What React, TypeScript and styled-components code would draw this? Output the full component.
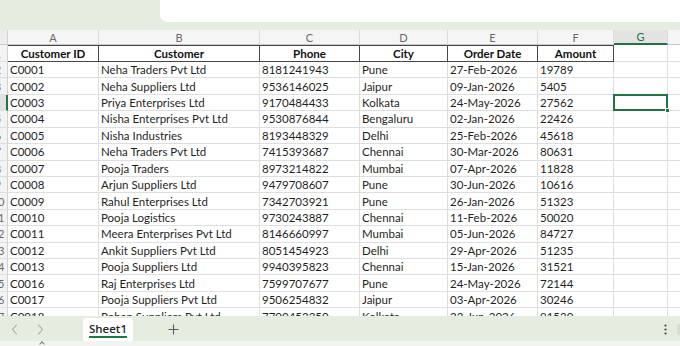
import * as React from 'react';
import styled, { createGlobalStyle } from 'styled-components';

const GlobalStyle = createGlobalStyle`
  html, body {
    margin: 0;
    padding: 0;
    background: #ffffff;
  }
  body {
    font-family: Lato, "Open Sans", "Liberation Sans", sans-serif;
  }
`;

const columns = [
  { letter: 'A', title: 'Customer ID', width: 91 },
  { letter: 'B', title: 'Customer', width: 161 },
  { letter: 'C', title: 'Phone', width: 100 },
  { letter: 'D', title: 'City', width: 88 },
  { letter: 'E', title: 'Order Date', width: 90 },
  { letter: 'F', title: 'Amount', width: 76 },
];

const G_WIDTH = 54;
const H_WIDTH = 64;

const rows = [
  ['C0001', 'Neha Traders Pvt Ltd', '8181241943', 'Pune', '27-Feb-2026', '19789'],
  ['C0002', 'Neha Suppliers Ltd', '9536146025', 'Jaipur', '09-Jan-2026', '5405'],
  ['C0003', 'Priya Enterprises Ltd', '9170484433', 'Kolkata', '24-May-2026', '27562'],
  ['C0004', 'Nisha Enterprises Pvt Ltd', '9530876844', 'Bengaluru', '02-Jan-2026', '22426'],
  ['C0005', 'Nisha Industries', '8193448329', 'Delhi', '25-Feb-2026', '45618'],
  ['C0006', 'Neha Traders Pvt Ltd', '7415393687', 'Chennai', '30-Mar-2026', '80631'],
  ['C0007', 'Pooja Traders', '8973214822', 'Mumbai', '07-Apr-2026', '11828'],
  ['C0008', 'Arjun Suppliers Ltd', '9479708607', 'Pune', '30-Jun-2026', '10616'],
  ['C0009', 'Rahul Enterprises Ltd', '7342703921', 'Pune', '26-Jan-2026', '51323'],
  ['C0010', 'Pooja Logistics', '9730243887', 'Chennai', '11-Feb-2026', '50020'],
  ['C0011', 'Meera Enterprises Pvt Ltd', '8146660997', 'Mumbai', '05-Jun-2026', '84727'],
  ['C0012', 'Ankit Suppliers Pvt Ltd', '8051454923', 'Delhi', '29-Apr-2026', '51235'],
  ['C0013', 'Pooja Suppliers Ltd', '9940395823', 'Chennai', '15-Jan-2026', '31521'],
  ['C0016', 'Raj Enterprises Ltd', '7599707677', 'Pune', '24-May-2026', '72144'],
  ['C0017', 'Pooja Suppliers Pvt Ltd', '9506254832', 'Jaipur', '03-Apr-2026', '30246'],
  ['C0018', 'Rohan Suppliers Pvt Ltd', '7700453350', 'Kolkata', '23-Jun-2026', '91530'],
];

const SELECTED_ROW = 4;

const Screen = styled.div`
  width: 680px;
  height: 346px;
  display: flex;
  flex-direction: column;
  overflow: hidden;
  background: #ffffff;
`;

const TopBar = styled.div`
  height: 30px;
  flex: none;
  display: flex;
  justify-content: flex-end;
  align-items: flex-start;
  background: #e5ede1;
`;

const FormulaBox = styled.div`
  width: 520px;
  height: 22px;
  background: #ffffff;
  border-bottom-left-radius: 7px;
`;

const Sheet = styled.div`
  flex: 1;
  overflow: hidden;
  display: flex;
  flex-direction: column;
  font-size: 11.5px;
  color: #1f1f1f;
`;

const Row = styled.div<{ $h: number }>`
  display: flex;
  flex: none;
  height: ${(p) => p.$h}px;
`;

const Corner = styled.div`
  width: 8px;
  flex: none;
  box-sizing: border-box;
  background: #ececec;
  border-right: 1px solid #d2d2d2;
  border-bottom: 1px solid #c8c8c8;
`;

const ColLetter = styled.div<{ $w: number; $active?: boolean }>`
  width: ${(p) => p.$w}px;
  flex: none;
  box-sizing: border-box;
  display: flex;
  align-items: center;
  justify-content: center;
  background: ${(p) => (p.$active ? '#e3e3e3' : '#f5f5f5')};
  border-right: 1px solid #dcdcdc;
  border-bottom: ${(p) => (p.$active ? '2px solid #217346' : '1px solid #c8c8c8')};
  color: ${(p) => (p.$active ? '#217346' : '#6a6a6a')};
  font-size: 11px;
`;

const RowHead = styled.div<{ $active?: boolean }>`
  width: 8px;
  flex: none;
  box-sizing: border-box;
  overflow: hidden;
  display: flex;
  justify-content: flex-end;
  align-items: center;
  background: ${(p) => (p.$active ? '#e1e1e1' : '#f3f3f3')};
  border-right: ${(p) => (p.$active ? '2px solid #217346' : '1px solid #d2d2d2')};
  border-bottom: 1px solid #dedede;
  color: #6a6a6a;
  font-size: 11px;
`;

const RowNum = styled.span`
  flex: none;
  width: 24px;
  margin-right: -3px;
  text-align: center;
`;

const TitleCell = styled.div<{ $w: number }>`
  width: ${(p) => p.$w}px;
  flex: none;
  box-sizing: border-box;
  display: flex;
  align-items: center;
  justify-content: center;
  border-top: 1px solid #474747;
  border-right: 1px solid #474747;
  border-bottom: 1px solid #474747;
  font-weight: 700;
  color: #111111;
  white-space: nowrap;
`;

const Cell = styled.div<{ $w: number }>`
  width: ${(p) => p.$w}px;
  flex: none;
  box-sizing: border-box;
  display: flex;
  align-items: center;
  padding-left: 2px;
  border-right: 1px solid #dedede;
  border-bottom: 1px solid #dedede;
  white-space: nowrap;
  overflow: hidden;
`;

const BlankCell = styled(Cell)<{ $selected?: boolean }>`
  position: relative;
  overflow: visible;
  ${(p) =>
    p.$selected &&
    `
    &::after {
      content: '';
      position: absolute;
      left: -1px;
      top: -1px;
      right: -1px;
      bottom: -1px;
      border: 2px solid #217346;
      z-index: 2;
    }
    &::before {
      content: '';
      position: absolute;
      right: -3px;
      bottom: -3px;
      width: 5px;
      height: 5px;
      background: #217346;
      border: 1px solid #ffffff;
      box-sizing: border-box;
      z-index: 3;
    }
  `}
`;

const TabBar = styled.div`
  height: 25px;
  flex: none;
  display: flex;
  align-items: stretch;
  background: #e5ede1;
  padding-top: 2px;
  box-sizing: border-box;
`;

const NavButton = styled.div`
  width: 26px;
  display: flex;
  align-items: center;
  justify-content: center;
  color: #a4a8a3;
`;

const Nav = styled.div`
  display: flex;
  padding-left: 1px;
  width: 82px;
`;

const SheetTab = styled.div`
  width: 50px;
  display: flex;
  flex-direction: column;
  align-items: center;
  justify-content: center;
  background: #ffffff;
  border-radius: 4px 4px 0 0;
  font-family: "Open Sans", Lato, sans-serif;
  font-size: 11.5px;
  font-weight: 600;
  color: #262626;
`;

const TabLabel = styled.span`
  padding-bottom: 1px;
  border-bottom: 2px solid #1e7a45;
  line-height: 13px;
`;

const AddSheet = styled.div`
  width: 80px;
  display: flex;
  align-items: center;
  justify-content: center;
  color: #5c5c5c;
`;

const Spacer = styled.div`
  flex: 1;
`;

const MoreButton = styled.div`
  width: 14px;
  margin-right: 5px;
  display: flex;
  align-items: center;
  justify-content: center;
  color: #444444;
`;

const EdgeDot = styled.div`
  width: 3px;
  margin: 6px 0;
  border-radius: 6px 0 0 6px;
  background: #d5dcd2;
`;

const StatusStrip = styled.div`
  height: 5px;
  flex: none;
  background: #f3f4f2;
  position: relative;
  overflow: hidden;
`;

const Caret = styled.span`
  position: absolute;
  left: 40px;
  top: 1px;
  width: 3px;
  height: 3px;
  border-left: 1px solid #777;
  border-top: 1px solid #777;
  transform: rotate(45deg);
`;

const Chevron = ({ left }: { left?: boolean }) => (
  <svg width="7" height="11" viewBox="0 0 7 11" fill="none">
    <path
      d={left ? 'M5.5 1 L1.5 5.5 L5.5 10' : 'M1.5 1 L5.5 5.5 L1.5 10'}
      stroke="currentColor"
      strokeWidth="1.1"
      strokeLinecap="round"
      strokeLinejoin="round"
    />
  </svg>
);

const dataRowHeight = 16.43;

export default function App() {
  return (
    <Screen>
      <GlobalStyle />
      <TopBar>
        <FormulaBox />
      </TopBar>
      <Sheet>
        <Row $h={15}>
          <Corner />
          {columns.map((c) => (
            <ColLetter key={c.letter} $w={c.width}>
              {c.letter}
            </ColLetter>
          ))}
          <ColLetter $w={G_WIDTH} $active>
            G
          </ColLetter>
          <ColLetter $w={H_WIDTH} />
        </Row>
        <Row $h={17}>
          <RowHead>
            <RowNum>1</RowNum>
          </RowHead>
          {columns.map((c) => (
            <TitleCell key={c.letter} $w={c.width}>
              {c.title}
            </TitleCell>
          ))}
          <BlankCell $w={G_WIDTH} />
          <BlankCell $w={H_WIDTH} />
        </Row>
        {rows.map((r, i) => {
          const n = i + 2;
          return (
            <Row key={r[0]} $h={dataRowHeight}>
              <RowHead $active={n === SELECTED_ROW}>
                <RowNum>{n}</RowNum>
              </RowHead>
              {r.map((v, j) => (
                <Cell key={j} $w={columns[j].width}>
                  {v}
                </Cell>
              ))}
              <BlankCell $w={G_WIDTH} $selected={n === SELECTED_ROW} />
              <BlankCell $w={H_WIDTH} />
            </Row>
          );
        })}
      </Sheet>
      <TabBar>
        <Nav>
          <NavButton>
            <Chevron left />
          </NavButton>
          <NavButton>
            <Chevron />
          </NavButton>
        </Nav>
        <SheetTab>
          <TabLabel>Sheet1</TabLabel>
        </SheetTab>
        <AddSheet>
          <svg width="11" height="11" viewBox="0 0 11 11">
            <path d="M5.5 0.5 V10.5 M0.5 5.5 H10.5" stroke="currentColor" strokeWidth="1.1" />
          </svg>
        </AddSheet>
        <Spacer />
        <MoreButton>
          <svg width="3" height="11" viewBox="0 0 3 11">
            <circle cx="1.5" cy="1.5" r="1.1" fill="currentColor" />
            <circle cx="1.5" cy="5.5" r="1.1" fill="currentColor" />
            <circle cx="1.5" cy="9.5" r="1.1" fill="currentColor" />
          </svg>
        </MoreButton>
        <EdgeDot />
      </TabBar>
      <StatusStrip>
        <Caret />
      </StatusStrip>
    </Screen>
  );
}
